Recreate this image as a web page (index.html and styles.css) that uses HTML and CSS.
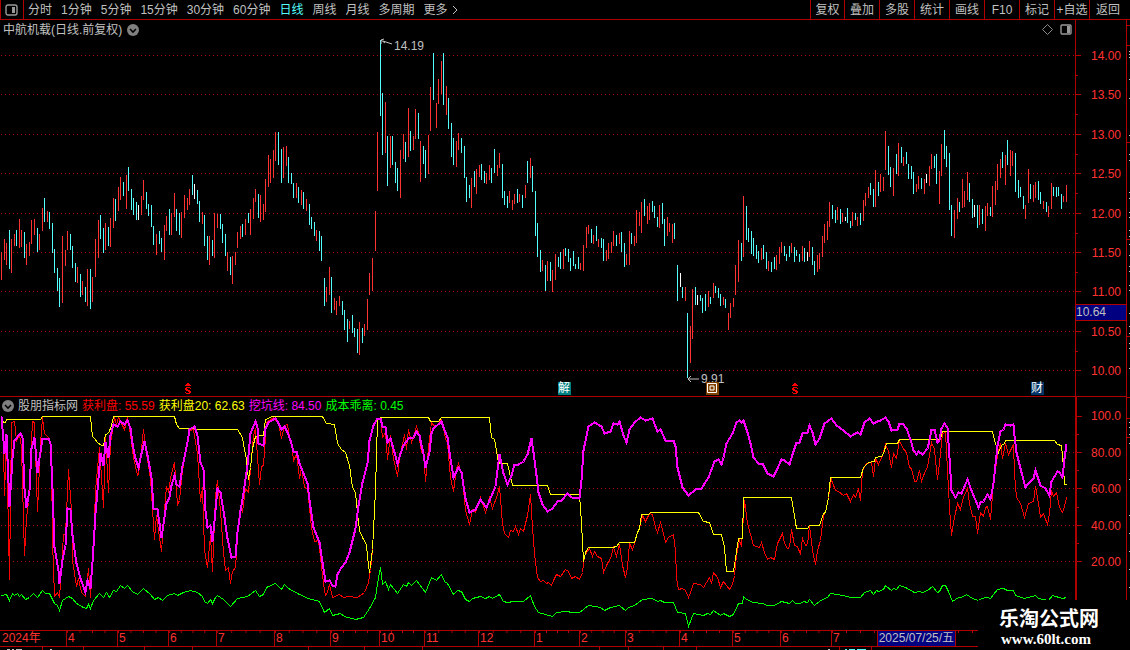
FILE: index.html
```html
<!DOCTYPE html>
<html lang="zh-CN">

<head>
    <meta charset="UTF-8">
    <title>中航机载 日线</title>
    <link rel="stylesheet" href="styles.css">
</head>

<body>
    <header class="toolbar">
        <button class="side-btn" aria-label="侧栏">
            <svg width="14" height="12" viewBox="0 0 14 12">
                <rect x="1" y="1" width="11" height="10" rx="2" fill="none" stroke="#999" stroke-width="1.4" />
                <rect x="7" y="3" width="3" height="6" fill="#999" />
            </svg>
        </button>
        <nav class="periods">
            <button>分时</button>
            <button>1分钟</button>
            <button>5分钟</button>
            <button>15分钟</button>
            <button>30分钟</button>
            <button>60分钟</button>
            <button class="on">日线</button>
            <button>周线</button>
            <button>月线</button>
            <button>多周期</button>
            <button class="more">更多
                <svg width="6" height="10" viewBox="0 0 6 10"><path d="M1 1l4 4l-4 4" fill="none" stroke="#c0c0c0" /></svg>
            </button>
        </nav>
        <div class="tools">
            <button>复权</button>
            <button>叠加</button>
            <button>多股</button>
            <button>统计</button>
            <button>画线</button>
            <button>F10</button>
            <button>标记</button>
            <button>+自选</button>
            <button>返回</button>
        </div>
    </header>

    <main class="board">
        <!-- K线 -->
        <section class="plot price">
            <svg class="chart" id="kline" viewBox="0 20 1075 376" preserveAspectRatio="none"></svg>
            <h1 class="title">中航机载(日线.前复权)
                <button class="fold" aria-label="展开">
                    <svg width="12" height="12" viewBox="0 0 12 12"><circle cx="6" cy="6" r="6" fill="#808080" /><path d="M3 5l3 3l3-3" fill="none" stroke="#000" stroke-width="1.6" /></svg>
                </button>
            </h1>
            <div class="corner">
                <svg width="11" height="11" viewBox="0 0 11 11"><path d="M5 0l5 5l-5 5l-5-5z" transform="translate(.5 .5)" fill="none" stroke="#888" /></svg>
                <svg width="12" height="11" viewBox="0 0 12 11"><rect x="1" y="1" width="10" height="9" rx="1" fill="none" stroke="#999" stroke-width="1.4" /><rect x="7" y="2" width="3" height="7" fill="#999" /></svg>
            </div>
            <span class="pin high">
                <svg width="13" height="8" viewBox="0 0 13 8"><path d="M1 6V2L4 1M1 2l4 3M3 3l9 3" fill="none" stroke="#c0c0c0" /></svg>14.19
            </span>
            <span class="pin low">
                <svg width="13" height="8" viewBox="0 0 13 8"><path d="M1 4h11M4 1l-3 3l3 3" fill="none" stroke="#c0c0c0" /></svg>9.91
            </span>
            <span class="mark bonus bonus1"><svg width="7" height="12" viewBox="0 0 7 12"><path d="M2 0h2v1h1v1h1v1H0v-1h1v-1h1zM1 4h4v1h1v1H5v-1H2v1h1v1h2v1h1v2h-1v1H1v-1H0v-1h1v1h3v-1H3v-1H1v-1H0v-2h1z" fill="#f00" /></svg></span>
            <span class="mark tag jie">解</span>
            <span class="mark tag hui"><svg width="13" height="13" viewBox="0 0 13 13" fill="none" stroke="#fff"><path d="M1.5 1.5h9v9h-9zM4 4h4v4H4z" /></svg></span>
            <span class="mark bonus bonus2"><svg width="7" height="12" viewBox="0 0 7 12"><path d="M2 0h2v1h1v1h1v1H0v-1h1v-1h1zM1 4h4v1h1v1H5v-1H2v1h1v1h2v1h1v2h-1v1H1v-1H0v-1h1v1h3v-1H3v-1H1v-1H0v-2h1z" fill="#f00" /></svg></span>
            <span class="mark tag cai">财</span>
        </section>
        <aside class="axis price-axis">
            <svg class="ticks" id="priceTicks" viewBox="0 20 5 376" preserveAspectRatio="none"></svg>
            <span>14.00</span>
            <span>13.50</span>
            <span>13.00</span>
            <span>12.50</span>
            <span>12.00</span>
            <span>11.50</span>
            <span>11.00</span>
            <span>10.50</span>
            <span>10.00</span>
            <b class="cursor">10.64</b>
        </aside>

        <!-- 指标 -->
        <section class="plot index">
            <svg class="chart" id="lines" viewBox="0 397 1075 233" preserveAspectRatio="none"></svg>
            <p class="legend">
                <button class="fold" aria-label="指标">
                    <svg width="12" height="12" viewBox="0 0 12 12"><circle cx="6" cy="6" r="6" fill="#808080" /><path d="M3 5l3 3l3-3" fill="none" stroke="#000" stroke-width="1.6" /></svg>
                </button>
                <span>股朋指标网</span>
                <span class="red">获利盘: 55.59</span>
                <span class="yellow">获利盘20: 62.63</span>
                <span class="pink">挖坑线: 84.50</span>
                <span class="green">成本乖离: 0.45</span>
            </p>
        </section>
        <aside class="axis index-axis">
            <svg class="ticks" id="indexTicks" viewBox="0 397 5 233" preserveAspectRatio="none"></svg>
            <span>100.0</span>
            <span>80.00</span>
            <span>60.00</span>
            <span>40.00</span>
            <span>20.00</span>
        </aside>
        <svg class="edge" id="edge" viewBox="1127 20 3 610" preserveAspectRatio="none"></svg>
    </main>

    <footer class="months">
        <span>2024年</span>
        <span>4</span>
        <span>5</span>
        <span>6</span>
        <span>7</span>
        <span>8</span>
        <span>9</span>
        <span>10</span>
        <span>11</span>
        <span>12</span>
        <span>1</span>
        <span>2</span>
        <span>3</span>
        <span>4</span>
        <span>5</span>
        <span>6</span>
        <span class="last">7<time class="today" datetime="2025-07-25">2025/07/25/五</time></span>
    </footer>
    <svg class="under" viewBox="0 647 1130 3" preserveAspectRatio="none">
        <path d="M42 647h1v3h-1zM83 647h1v3h-1zM144 647h1v3h-1zM192 647h1v3h-1zM308 647h1v3h-1zM364 647h1v3h-1zM422 647h1v3h-1zM599 647h1v3h-1zM628 647h1v3h-1zM663 647h1v3h-1zM696 647h1v3h-1zM839 647h1v3h-1zM871 647h1v3h-1z" fill="#b00000" />
        <path d="M7 649h3v1h-3zM12 649h2v1h-2zM16 649h6v1h-6zM50 649h2v1h-2zM828 649h2v1h-2z" fill="#c0c0c0" />
        <path d="M845 649h2v1h-2zM849 649h6v1h-6zM857 649h9v1h-9z" fill="#54fcfc" />
    </svg>

    <div class="site">
        <strong>乐淘公式网</strong>
        <em>www.60lt.com</em>
    </div>

    <script src="chart.js"></script>
</body>

</html>
```
FILE: styles.css
```css
* {
    box-sizing: border-box;
}

body {
    display: flex;
    flex-direction: column;
    height: 100vh;
    margin: 0;
    overflow: hidden;
    background: #000;
    color: #c0c0c0;
    font: 12px/16px "Liberation Sans", "Noto Sans CJK SC", sans-serif;
}

button {
    padding: 0;
    border: 0;
    background: none;
    color: inherit;
    font: inherit;
    white-space: nowrap;
}

svg {
    display: block;
}

/* 顶部工具栏 */
.toolbar {
    display: flex;
    flex: none;
    height: 20px;
    padding-right: 4px;
    border-bottom: 1px solid #b00000;
}

.side-btn {
    display: flex;
    align-items: center;
    justify-content: center;
    width: 24px;
    border: solid #b00000;
    border-width: 0 1px;
}

.periods {
    display: flex;
    flex: 1;
    gap: 9px;
    padding-left: 4px;
}

.periods .on {
    color: #54fcfc;
}

.more {
    display: flex;
    align-items: center;
    gap: 4px;
}

.tools {
    display: grid;
    grid-template-columns: 34px repeat(7, 35px) 37px;
}

.tools button {
    border-left: 1px solid #b00000;
}

/* 主图 + 副图 */
.board {
    display: grid;
    flex: 1;
    grid-template-columns: 1fr 52px 3px;
    grid-template-rows: 377fr 233fr;
    min-height: 0;
}

.plot {
    position: relative;
    min-height: 0;
}

.chart {
    width: 100%;
    height: 100%;
    shape-rendering: crispEdges;
}

.price,
.price-axis {
    border-bottom: 1px solid #b00000;
}

.title,
.legend {
    position: absolute;
    left: 3px;
    display: flex;
    align-items: center;
    margin: 0;
    font-size: 12px;
    font-weight: normal;
    white-space: nowrap;
}

.title {
    top: 2px;
    gap: 5px;
}

.legend {
    top: 1px;
    left: 2px;
    gap: 4px;
}

.corner {
    position: absolute;
    top: 4px;
    right: 3px;
    display: flex;
    gap: 7px;
}

.red { color: #ff0000; }
.yellow { color: #ffff00; }
.pink { color: #ff00ff; }
.green { color: #00ff00; }

/* 最高价 最低价 */
.pin {
    position: absolute;
    display: flex;
    gap: 1px;
}

.high {
    top: 18px;
    left: 380px;
}

.low {
    top: 351px;
    left: 687px;
    align-items: center;
}

/* 底部标记 */
.mark {
    position: absolute;
    bottom: 1px;
}

.tag {
    width: 13px;
    height: 13px;
    color: #fff;
    line-height: 13px;
}

.bonus svg {
    shape-rendering: crispEdges;
}

.bonus1 { left: 185px; }
.bonus2 { left: 792px; }

.jie {
    left: 558px;
    background: #008080;
}

.hui {
    left: 706px;
    background: #804000;
}

.cai {
    left: 1031px;
    background: #003366;
}

/* 坐标轴 */
.axis {
    position: relative;
    display: flex;
    flex-direction: column;
    justify-content: space-between;
    border-left: 1px solid #b00000;
    border-right: 1px solid #b00000;
    color: #ff3232;
    text-align: right;
}

.axis span {
    padding-right: 5px;
}

.price-axis {
    padding: 28px 0 17px;
}

.index-axis {
    padding: 11px 0 60px;
    border-left-width: 2px;
}

.ticks {
    position: absolute;
    top: 0;
    left: 0;
    width: 5px;
    height: 100%;
    shape-rendering: crispEdges;
}

.cursor {
    position: absolute;
    top: 284px;
    left: 0;
    right: 0;
    border: solid #b00000;
    border-width: 1px 0;
    background: #000080;
    color: #c0c0c0;
    font-weight: normal;
    line-height: 15px;
    text-align: left;
}

.edge {
    grid-row: 1 / 3;
    grid-column: 3;
    width: 3px;
    height: 100%;
}

/* 月份 */
.months {
    display: grid;
    flex: none;
    grid-template-columns: 66fr 51fr 51fr 48fr 58fr 56fr 49fr 45fr 54fr 56fr 45fr 46fr 54fr 53fr 48fr 51fr 299fr;
    height: 17px;
    border: solid #b00000;
    border-width: 1px 0;
    color: #ff3232;
    line-height: 15px;
}

.months span {
    padding-left: 1px;
    border-left: 1px solid #b00000;
    background: linear-gradient(90deg, #b00000 1px, transparent 1px) 0 0 / 25% 2px repeat-x;
}

.months span:first-child {
    border-left-color: transparent;
    background: none;
}

.months .last {
    display: flex;
    gap: 37px;
    background-size: 14px 2px;
}

.today {
    padding: 0 1px;
    border: solid #b00000;
    border-width: 0 1px;
    background: #000080;
    color: #c0c0c0;
}

.under {
    flex: none;
    width: 100%;
    height: 3px;
}

/* 网站水印 */
.site {
    position: absolute;
    right: 0;
    bottom: 0;
    display: flex;
    flex-direction: column;
    width: 152px;
    height: 50px;
    padding: 7px 0 0 21px;
    background: #000;
    color: #fff;
}

.site strong {
    font-size: 20px;
    line-height: 24px;
}

.site em {
    padding-left: 2px;
    font: bold 15px/16px "Liberation Serif", serif;
}
```
FILE: chart.js
```js
// 每根K线: 颜色(r涨 c跌 w平)+x,最高,最低
const bars = `r1,252,280 r4,239,260 r6,243,265 c9,230,269 r11,239,273 r14,234,246 c16,230,246 r19,219,248 r21,230,247 c24,232,258
r26,244,265 r29,242,256 r31,220,244 r34,219,235 c37,228,252 r39,234,250 r42,208,231 c44,198,222 r47,211,222 c49,212,229
c52,223,253 c54,249,273 c57,268,291 c59,278,307 r62,236,303 r65,250,266 r67,231,250 c70,234,250 c72,246,268 c75,263,282
r77,267,283 c80,274,297 r82,281,295 c85,287,302 r87,269,306 c90,269,309 r92,277,302 r95,239,277 r98,220,258 c100,215,239
c103,228,253 r105,223,250 c108,227,246 r110,218,247 r113,198,228 c115,199,221 r118,187,211 r120,177,200 c123,182,196
r126,175,209 c128,167,191 c131,189,210 c133,198,215 c136,202,220 w138,205,220 r141,196,215 r143,180,200 c146,192,209
c148,204,216 c151,205,227 c153,226,245 r156,234,255 c159,231,244 c161,238,252 r164,225,260 r166,216,231 c169,209,235
r171,213,235 r174,193,217 c176,209,231 c179,213,235 r181,212,238 r184,195,218 r187,198,210 r189,189,205 c192,175,195
w194,184,199 c197,190,204 c199,201,222 r202,212,224 c204,215,246 c207,236,260 r209,236,265 c212,240,256 r214,213,258
r217,214,228 c220,214,229 c222,224,243 c225,234,256 r227,252,271 c230,257,275 r232,256,284 r235,252,265 r237,232,248
r240,226,239 c242,224,237 r245,219,235 c248,213,223 r250,209,235 r253,198,219 r255,189,202 c258,194,218 r260,195,222
r263,204,220 r265,179,212 r268,155,187 r270,159,183 r273,150,178 r275,132,161 c278,132,165 c281,149,183 r283,147,178
r286,146,166 c288,157,183 c291,173,184 c293,183,198 r296,183,198 c298,187,203 r301,190,205 c303,192,209 r306,199,211
c309,204,225 c311,217,229 c314,222,236 r316,230,241 c319,231,251 c321,236,261 c324,278,306 r326,287,302 r329,267,295
c331,277,313 r334,298,310 r336,301,315 r339,296,306 c342,301,315 c344,310,330 c347,319,342 r349,321,329 c352,315,333
c354,328,337 c357,329,353 r359,322,355 c362,328,343 r364,324,336 r367,299,330 r369,273,295 r372,258,291 r375,211,251
r377,132,191 c380,40,116 c382,93,155 r385,102,153 c387,136,186 r390,136,168 c392,136,165 c395,162,183 c397,168,191
r400,150,198 r403,134,159 c405,142,162 r408,108,157 c410,131,151 r413,136,150 r415,109,139 c418,113,139 r420,141,182
c423,146,164 c425,150,178 r428,135,174 r430,87,131 c433,53,100 r436,103,128 r438,79,104 r441,61,94 c443,53,105
r446,86,115 c448,98,129 c451,123,157 c453,138,165 r456,141,167 r458,133,150 c461,138,153 c464,146,178 c466,177,202
c469,185,198 r471,178,208 c474,171,187 r476,169,194 r479,165,177 c481,164,180 c484,171,183 r486,173,184 r489,165,180
c491,168,183 c494,149,173 r497,165,176 r499,153,168 c502,164,198 c504,191,205 c507,196,208 r509,191,203 r512,200,210
r514,194,204 c517,189,203 r519,194,202 c522,195,208 r525,185,198 c527,161,183 r530,158,178 c532,166,192 c535,191,236
c537,223,257 c540,250,272 r542,260,271 c545,265,291 r547,261,281 c550,262,281 r552,270,292 r555,254,280 c558,257,267
c560,252,269 r563,249,269 c565,248,256 c568,249,262 c570,258,271 c573,251,266 c575,264,269 c578,257,269 r580,263,270
r583,245,271 r586,227,248 r588,225,234 c591,229,243 r593,235,244 c596,226,241 r598,239,247 c601,238,248 c603,239,261
r606,250,261 r608,243,259 r611,242,253 r613,231,246 c616,235,246 r619,233,244 c621,232,252 c624,243,267 r626,254,265
r629,231,265 c631,233,244 r634,236,246 r636,210,243 r639,212,226 r641,202,233 c644,199,216 r647,206,224 r649,203,220
c652,201,212 c654,206,218 c657,217,227 r659,205,228 c662,203,224 c664,219,246 r667,217,236 r669,223,232 r672,224,243
c674,223,239 c677,265,301 w680,273,287 c682,287,298 r685,287,301 c687,313,378 r690,326,363 r692,289,339 c695,287,305
w697,295,305 c700,295,301 c702,298,313 c705,294,311 r708,291,307 c710,297,304 r713,283,298 c715,286,293 c718,288,298
c720,294,306 r723,297,305 c725,299,308 r728,313,330 r730,303,318 r733,298,307 r735,265,295 r738,240,282 c741,243,261
r743,196,257 c746,206,240 c748,228,242 c751,231,254 c753,238,256 c756,245,259 c758,251,263 r761,248,260 c763,245,259
c766,252,269 r768,261,271 c771,262,272 c774,257,269 r776,255,270 r779,247,264 r781,242,253 c784,246,256 c786,254,261
c789,246,257 r791,243,253 c794,247,262 c796,250,256 c799,254,262 r802,246,261 c804,248,262 w807,252,261 r809,241,257
c812,247,265 c814,261,275 r817,255,272 r819,253,269 r822,236,257 r824,224,243 r827,221,240 r829,202,227 c832,205,219
c835,210,223 r837,207,220 c840,209,224 r842,213,222 w845,217,221 c847,208,223 c850,221,228 r852,212,226 c855,213,220
r857,217,226 c860,213,225 r863,200,221 r865,193,206 r868,187,198 c870,183,195 c873,189,207 r875,170,207 c878,182,196
r880,174,192 r883,177,191 r885,131,170 c888,146,175 c890,167,187 r893,168,196 c896,154,174 r898,143,176 c901,147,163
r903,157,166 c906,152,164 c908,164,179 c911,166,179 c913,172,194 r916,184,192 r918,176,189 c921,178,189 r924,179,194
w926,174,183 r929,166,186 r931,154,169 c934,156,168 c936,154,184 r939,171,204 r941,144,176 c944,130,159 c946,146,167
c949,153,210 c951,205,236 r954,210,238 r957,198,219 c959,202,212 r962,179,208 r964,191,207 r967,172,200 c969,183,202
c972,199,218 w974,205,217 c977,205,228 r979,205,225 c982,209,224 r985,206,231 r987,203,216 c990,207,216 r992,186,217
r995,181,205 r997,164,190 r1000,159,178 c1002,152,168 r1005,155,185 c1007,140,165 r1010,150,176 r1012,151,166
c1015,153,192 c1018,180,198 c1020,187,197 c1023,196,209 r1025,205,219 r1028,169,203 c1030,184,199 r1033,185,202
r1035,182,198 c1038,181,200 c1040,192,204 r1043,201,209 c1046,202,212 r1048,206,217 r1051,183,209 c1053,187,196
c1056,187,197 c1058,187,196 c1061,194,209 r1063,196,202 r1066,185,202`;

// 获利盘
const profit = `1,418 3,447 4,495 6,437 9,579 11,422 14,421 16,440 19,434 21,447 24,555 26,517 28,502 32,421 34,422 37,511 40,443
42,417 44,433 49,438 51,458 52,540 54,596 57,592 59,597 61,567 63,534 65,534 68,469 71,510 72,560 76,586 78,578 81,592 85,596
88,568 90,597 93,547 95,490 99,447 103,507 105,435 108,492 110,443 114,417 116,424 118,417 124,429 127,417 129,428 133,457
137,475 138,474 141,448 143,429 146,453 150,478 154,539 156,515 159,537 161,551 165,497 166,486 168,491 171,473 174,462
177,504 179,500 182,470 187,442 189,430 193,429 197,453 200,501 202,487 204,550 207,567 210,535 212,571 215,495 217,480
220,510 223,552 225,570 228,567 230,583 232,571 235,567 238,523 240,507 242,512 245,488 248,492 251,457 253,435 255,428
259,484 261,466 263,465 266,422 273,417 278,423 281,438 284,425 287,424 289,437 291,440 293,461 296,453 299,478 301,467
304,487 307,488 311,527 314,541 318,540 320,557 323,583 325,595 327,592 329,584 332,597 339,594 343,597 348,596 357,597
364,592 368,582 370,570 372,549 375,490 377,419 380,418 382,437 385,432 387,459 390,435 393,458 397,476 399,458 404,434
406,449 408,429 411,442 413,437 416,426 418,432 421,452 423,451 425,481 428,447 431,422 435,427 441,419 445,438 447,443
450,477 453,491 456,468 458,463 462,478 465,510 469,524 472,509 475,512 480,497 485,512 489,497 492,508 496,497 499,486
502,523 504,533 508,537 510,530 513,531 515,526 518,534 520,528 523,531 527,515 530,494 532,527 534,553 537,577 540,581
543,580 546,583 548,582 551,585 553,580 556,574 560,576 565,569 568,571 571,578 575,576 579,579 582,572 584,555 589,548
592,556 594,551 597,556 601,558 603,572 607,563 610,558 613,547 616,556 619,544 622,565 625,577 627,567 629,543 632,549
634,543 637,532 639,528 642,515 645,521 649,513 652,514 655,527 657,532 660,522 662,529 665,542 668,537 673,534 675,550
676,577 678,589 682,588 685,590 688,597 690,592 693,583 700,584 703,587 709,577 711,583 713,572 717,577 720,587 723,581
726,585 729,589 732,584 734,575 736,555 739,540 741,546 744,500 747,523 753,545 759,547 761,542 764,552 767,559 770,557
774,559 777,543 782,533 784,543 787,548 789,547 791,529 794,545 797,546 800,554 802,538 805,545 807,544 809,525 812,550
815,564 817,550 820,540 823,515 825,512 828,497 831,479 835,490 838,491 843,495 846,493 850,501 853,494 855,497 858,488
860,500 862,470 866,463 871,462 873,476 875,458 878,464 882,455 885,444 888,451 891,467 893,453 896,458 899,440 902,447
906,452 909,467 911,468 914,481 916,481 919,470 921,481 925,470 927,467 931,442 934,449 937,479 939,463 942,433 945,432
947,470 949,507 951,535 954,517 957,503 960,509 963,497 967,488 969,503 972,516 975,516 977,533 980,512 983,516 985,507
987,506 990,519 993,483 997,455 1000,443 1002,458 1005,443 1008,454 1013,444 1014,473 1016,497 1020,503 1024,517 1028,503
1033,501 1035,486 1038,503 1040,517 1043,513 1047,524 1049,513 1051,490 1053,496 1056,492 1059,507 1062,512 1064,506 1066,497`;

// 获利盘20
const profit20 = `1,417 3,422 5,422 6,419 40,419 42,416 90,416 92,436 94,438 97,442 101,445 103,445 105,434 108,433 111,425 113,416
174,416 176,424 179,428 193,428 195,429 237,429 242,437 244,449 246,459 248,479 250,467 252,448 255,436 263,435 265,419
272,416 322,416 326,423 334,424 337,443 341,449 345,452 349,465 352,487 355,492 357,513 359,530 363,539 366,544 367,557
369,572 372,549 375,490 377,419 380,417 428,417 430,421 438,421 441,417 489,417 491,437 494,439 498,462 500,463 507,463
512,485 547,485 550,494 579,494 581,523 583,561 585,552 588,547 612,547 616,546 619,542 634,542 637,532 639,528 641,514
648,514 650,512 698,512 703,521 709,522 713,534 721,534 724,547 726,571 733,571 738,538 742,538 743,497 791,497 796,528
807,528 809,525 819,525 823,513 825,512 828,497 830,477 860,477 863,467 868,462 874,461 875,457 881,456 883,453 886,443
897,443 899,439 940,439 942,431 992,431 994,440 998,452 1001,445 1004,443 1005,440 1054,440 1057,444 1061,445 1063,467
1064,484 1066,484`;

// 挖坑线
const pit = `1,416 4,453 6,434 9,506 12,458 14,440 20,433 22,437 24,488 26,507 29,490 31,448 34,437 37,472 39,458 42,438 48,438
50,443 52,488 54,547 58,570 59,583 62,560 65,545 67,508 70,509 72,535 76,563 80,578 85,592 87,580 90,588 92,562 95,513
98,478 100,453 103,465 105,442 108,457 110,435 113,424 117,426 120,421 124,424 127,420 130,428 132,443 135,458 138,467
141,453 144,441 147,455 151,477 153,508 157,509 159,523 161,537 166,503 169,497 171,485 174,475 176,484 179,486 182,466
187,442 189,429 194,426 197,435 200,462 203,469 205,510 207,527 210,525 212,541 215,510 217,488 220,492 224,517 227,538
231,557 235,556 237,532 240,510 243,493 247,465 250,433 255,421 257,427 258,443 263,445 265,428 268,422 275,418 277,421
281,429 284,426 287,432 290,440 293,451 296,451 299,463 303,473 307,483 310,507 313,527 319,542 322,562 325,581 329,580
332,585 335,586 337,574 341,567 345,562 349,552 355,528 358,505 362,482 367,463 369,440 373,425 377,418 380,418 382,426
385,427 387,442 390,438 394,452 397,463 400,453 403,445 408,438 413,437 416,431 419,435 421,445 423,453 425,467 429,452
431,433 433,428 441,421 443,427 447,437 449,452 453,477 458,467 461,472 465,498 469,512 475,509 480,499 486,507 489,500
495,486 497,470 499,454 503,473 507,484 511,475 514,464 518,464 523,461 527,454 531,438 533,452 536,475 538,492 542,504
547,511 552,508 557,501 561,500 567,493 571,497 579,498 581,480 583,450 588,426 594,422 601,426 604,433 610,431 613,423
617,424 619,421 623,435 626,442 629,429 634,422 640,417 645,420 652,418 657,431 660,429 665,440 673,440 675,446 677,467
682,487 688,495 695,489 701,488 708,477 714,461 718,459 721,464 723,457 726,443 732,433 736,422 739,420 741,422 743,420
747,432 750,443 753,457 758,463 762,463 767,473 773,476 777,468 781,459 784,460 789,464 792,454 796,442 799,442 802,433
807,432 809,425 812,432 815,444 819,438 824,423 831,418 836,425 843,430 850,436 853,434 857,432 860,434 864,422 869,418
873,423 877,421 880,420 885,417 888,421 891,430 897,429 899,423 902,423 906,428 910,439 913,450 916,454 918,451 922,454
927,448 929,440 931,429 934,429 937,442 939,440 941,428 944,423 947,427 949,457 951,490 955,497 958,492 961,493 967,479
971,490 978,507 980,502 983,501 987,494 990,499 993,483 997,445 1000,431 1003,429 1005,424 1010,425 1013,424 1014,435
1016,452 1020,468 1025,487 1028,483 1033,478 1035,470 1040,485 1045,488 1049,495 1051,481 1057,471 1059,472 1062,477
1064,458 1066,444`;

// 成本乖离
const bias = `1,595 6,594 9,600 12,593 14,595 17,593 19,596 21,594 25,599 29,597 33,593 37,597 42,590 45,593 49,593 54,603 57,605
59,610 62,600 65,598 68,596 72,598 76,603 83,607 86,608 88,604 90,608 93,600 99,593 103,597 106,592 109,597 113,590 116,591
120,585 124,588 127,585 132,591 137,594 143,588 150,594 154,599 158,597 162,600 167,595 174,593 177,595 183,592 190,590
197,592 202,596 204,601 207,603 210,599 212,603 215,597 217,595 223,599 230,606 237,598 247,596 255,590 259,596 263,594
266,587 275,583 281,589 284,584 288,588 299,594 308,598 319,601 324,612 329,608 332,615 340,613 344,616 355,619 363,617
369,608 375,597 377,583 380,567 382,584 385,581 388,589 390,584 397,593 403,584 406,586 408,582 411,585 416,580 425,592
431,577 436,580 441,574 444,581 447,583 453,594 457,590 461,591 465,599 469,601 472,598 480,596 485,598 489,596 492,598
499,594 503,601 507,602 513,601 523,601 530,595 534,606 538,612 552,616 556,612 566,611 572,612 579,612 588,605 600,607
604,610 610,607 619,605 625,610 628,607 634,605 642,599 652,598 657,601 660,600 664,602 673,602 677,612 685,613 688,626
693,613 703,615 707,613 710,614 713,610 720,615 723,613 729,616 733,614 738,603 742,603 743,596 746,599 753,602 762,603
767,605 774,605 781,601 789,603 792,600 795,603 800,603 803,601 807,602 809,599 814,605 820,600 827,597 830,593 843,595
850,597 860,597 864,592 870,590 873,594 876,590 878,591 883,589 885,585 891,590 893,588 896,589 899,585 905,587 914,592
919,591 922,592 927,590 932,586 937,592 939,591 942,585 945,585 948,591 952,601 958,597 961,597 966,594 972,598 978,600
981,598 987,597 990,598 993,594 997,589 1003,588 1007,590 1013,590 1015,595 1024,598 1035,595 1038,598 1048,600 1052,595
1062,598 1066,597`;

function add(id, name, attrs) {
    const el = document.createElementNS('http://www.w3.org/2000/svg', name);
    for (const key in attrs) el.setAttribute(key, attrs[key]);
    document.getElementById(id).appendChild(el);
}

// 虚线网格
function grid(id, rows) {
    let d = '';
    for (const y of rows) {
        for (let x = 1; x < 1075; x += 4) d += `M${x} ${y}h1v1h-1z`;
    }
    add(id, 'path', { d, fill: '#b00000' });
}

function ticks(id, long, short) {
    const d = long.map(y => `M0 ${y}h5v1h-5z`).join('') + short.map(y => `M0 ${y}h2v1h-2z`).join('');
    add(id, 'path', { d, fill: '#b00000' });
}

const priceRows = [55, 94, 134, 173, 213, 252, 291, 331, 370];
grid('kline', priceRows);
ticks('priceTicks', priceRows, [75, 114, 154, 193, 233, 272, 311, 351]);

const colors = { r: '#ff3232', c: '#54fcfc', w: '#ffffff' };
for (const c in colors) {
    const d = bars.split(/\s+/).filter(b => b[0] === c).map(b => {
        const [x, top, bottom] = b.slice(1).split(',');
        return `M${x} ${top}h1V${bottom}h-1z`;
    }).join('');
    add('kline', 'path', { d, fill: colors[c] });
}

grid('lines', [452, 488, 525, 561]);
ticks('indexTicks', [416, 452, 488, 525, 561], [434, 470, 507, 543]);

function line(points, stroke, width) {
    add('lines', 'polyline', { points, stroke, fill: 'none', 'stroke-width': width, transform: 'translate(.5 .5)' });
}
line(profit, '#ff0000', 1);
line(profit20, '#ffff00', 1);
line(pit, '#ff00ff', 2);
line(bias, '#00ff00', 1);

// 右侧窗口边缘
add('edge', 'path', { d: [25, 45, 142, 239, 336, 397, 418, 437].map(y => `M1127 ${y}h3v1h-3z`).join(''), fill: '#b00000' });
add('edge', 'path', {
    d: [51, 54, 57, 79, 98, 135, 154, 160, 192, 198, 212, 217, 230, 236, 244, 255, 266, 271, 285, 290, 313, 326, 333, 343, 348, 368,
        422, 427, 434, 443, 479, 515, 533, 551, 569, 587].map(y => `M1129 ${y}h1v1h-1z`).join(''),
    fill: '#c0c0c0'
});
```
